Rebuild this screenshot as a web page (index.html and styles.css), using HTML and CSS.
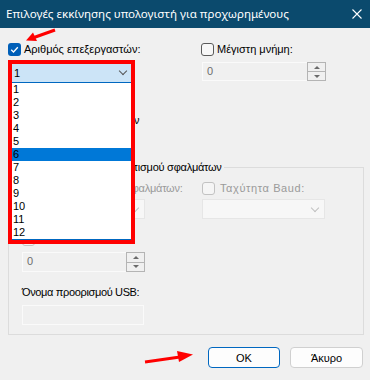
FILE: index.html
```html
<!DOCTYPE html>
<html lang="el">
<head>
  <meta charset="UTF-8">
  <title>Επιλογές εκκίνησης</title>
  <link rel="stylesheet" href="styles.css">
</head>
<body>
  <div class="dialog">
    <header class="titlebar">
      <span class="title">Επιλογές εκκίνησης υπολογιστή για προχωρημένους</span>
      <svg class="close" width="10" height="10" viewBox="0 0 10 10">
        <path d="M0.5 0.5L9.5 9.5M9.5 0.5L0.5 9.5" stroke="#fff" stroke-width="1.1"/>
      </svg>
    </header>

    <div class="body">
      <div class="top">
        <div class="col">
          <label class="check">
            <span class="box checked">
              <svg width="13" height="13" viewBox="0 0 13 13"><path d="M3.2 6.8L5.5 9L9.8 4.3" fill="none" stroke="#fff" stroke-width="1.3"/></svg>
            </span>
            Αριθμός επεξεργαστών:
          </label>
          <div class="combo">1</div>
        </div>
        <div class="col">
          <label class="check"><span class="box"></span>Μέγιστη μνήμη:</label>
          <div class="spin">
            <span class="spin-value">0</span>
            <div class="spin-btns">
              <span class="spin-up"></span>
              <span class="spin-down"></span>
            </div>
          </div>
        </div>
      </div>

      <label class="check row-pci"><span class="box"></span>Κλείδωμα PCI</label>
      <label class="check row-debug"><span class="box"></span>Εντοπισμός σφαλμάτων</label>

      <fieldset class="group">
        <legend>Καθολικές ρυθμίσεις εντοπισμού σφαλμάτων</legend>
        <div class="group-top">
          <div>
            <label class="check disabled label-port"><span class="box"></span>Θύρα εντοπισμού σφαλμάτων:</label>
            <div class="combo combo-off"><span class="chev"></span></div>
          </div>
          <div>
            <label class="check disabled label-baud"><span class="box"></span>Ταχύτητα Baud:</label>
            <div class="combo combo-off"><span class="chev"></span></div>
          </div>
        </div>
        <label class="check disabled row-channel"><span class="box"></span>Κανάλι:</label>
        <div class="spin spin-channel">
          <span class="spin-value">0</span>
          <div class="spin-btns">
            <span class="spin-up"></span>
            <span class="spin-down"></span>
          </div>
        </div>
        <div class="usb-label">Όνομα προορισμού USB:</div>
        <div class="textbox"></div>
      </fieldset>

      <div class="buttons">
        <button class="btn btn-default">OK</button>
        <button class="btn">Άκυρο</button>
      </div>
    </div>

    <!-- open list of the processors combo -->
    <div class="dropdown">
      <div class="dropdown-head">1<span class="chev chev-dark"></span></div>
      <ul class="dropdown-list">
        <li>1</li>
        <li>2</li>
        <li>3</li>
        <li>4</li>
        <li>5</li>
        <li class="selected">6</li>
        <li>7</li>
        <li>8</li>
        <li>9</li>
        <li>10</li>
        <li>11</li>
        <li>12</li>
      </ul>
    </div>

    <!-- red annotation arrows -->
    <svg class="marks" width="370" height="380" viewBox="0 0 370 380">
      <path d="M55 30L34 37.5" stroke="#f00" stroke-width="3"/>
      <path d="M26 40.5L33 32.5L37 41Z" fill="#f00"/>
      <path d="M145 362L180 357" stroke="#f00" stroke-width="3"/>
      <path d="M193 354.5L177 351L179 362Z" fill="#f00"/>
    </svg>
  </div>
</body>
</html>
```

FILE: styles.css
```css
body {
  margin: 0;
  background-color: #f0f0f0;
  font-family: "Liberation Sans", Arial, sans-serif;
  font-size: 11px;
  color: #000000;
}
.dialog {
  position: relative;
  width: 370px;
  height: 380px;
  overflow: hidden;
}
.titlebar {
  height: 28px;
  background-color: #0b4a6d;
  color: #ffffff;
  display: flex;
  align-items: center;
  justify-content: space-between;
  padding: 0 7px 0 6px;
}
.title {
  font-family: "Noto Sans", "DejaVu Sans", sans-serif;
  font-size: 11.6px;
  margin-top: -1px;
}
.close {
  margin-right: 1px;
}
.body {
  padding: 0 6px 0 8px;
}
.top {
  display: grid;
  grid-template-columns: 193px 1fr;
  padding-top: 13px;
}
.check {
  display: flex;
  align-items: center;
  height: 16px;
  gap: 3px;
  white-space: nowrap;
}
.box {
  width: 11px;
  height: 11px;
  border: 1px solid #5a5a5a;
  border-radius: 3px;
  background-color: #f7f7f7;
  flex: none;
}
.box.checked {
  width: 13px;
  height: 13px;
  border: none;
  background-color: #005fb8;
}
.box svg {
  display: block;
}
.check.disabled {
  color: #9a9a9a;
}
.check.disabled .box {
  border-color: #c2c2c2;
  background-color: #f5f5f5;
}
.combo {
  margin-top: 5px;
  height: 19px;
  width: 122px;
  box-sizing: border-box;
  border: 1px solid #e2e2e2;
  background-color: #f9f9f9;
  position: relative;
}
.spin {
  margin-top: 5px;
  margin-left: 1px;
  height: 19px;
  width: 124px;
  box-sizing: border-box;
  border: 1px solid #fafafa;
  display: flex;
  justify-content: space-between;
}
.spin-value {
  color: #6d6d6d;
  padding-left: 4px;
  line-height: 17px;
}
.spin-btns {
  width: 17px;
  display: flex;
  flex-direction: column;
  border: 1px solid #b4b4b4;
  margin: -1px -1px -1px 0;
}
.spin-up, .spin-down {
  flex: 1;
  display: flex;
  align-items: center;
  justify-content: center;
}
.spin-up {
  border-bottom: 1px solid #b4b4b4;
}
.spin-up::after, .spin-down::after {
  content: "";
  border-left: 3px solid transparent;
  border-right: 3px solid transparent;
}
.spin-up::after {
  border-bottom: 3px solid #6a6a6a;
}
.spin-down::after {
  border-top: 3px solid #6a6a6a;
}
.row-pci {
  margin-top: 11px;
}
.row-debug {
  margin-top: 4px;
  letter-spacing: -0.1px;
}
.group {
  margin: 31px 0 0 0;
  padding: 5px 13px 9px 13px;
  border: 1px solid #dcdcdc;
  min-width: 0;
  width: 356px;
  box-sizing: border-box;
}
.group legend {
  padding: 0 2px;
  margin-left: -10px;
  line-height: 16px;
  letter-spacing: -0.25px;
  white-space: nowrap;
}
.group-top {
  display: grid;
  grid-template-columns: 180px 1fr;
}
.group-top .check .box {
  margin-right: 2px;
}
.label-port {
  letter-spacing: -0.25px;
}
.label-baud {
  letter-spacing: 0.6px;
}
.combo-off {
  margin-top: 3px;
  height: 20px;
  width: 123px;
  background-color: #f7f7f7;
  border-color: #e6e6e6;
}
.chev {
  position: absolute;
  right: 6px;
  top: 5px;
  width: 5px;
  height: 5px;
  border-right: 1px solid #c0c0c0;
  border-bottom: 1px solid #c0c0c0;
  transform: rotate(45deg);
}
.row-channel {
  margin-top: 12px;
}
.spin-channel {
  margin-left: 0;
  width: 123px;
  height: 20px;
}
.usb-label {
  margin-top: 12px;
  line-height: 16px;
  letter-spacing: -0.35px;
}
.textbox {
  margin-top: 5px;
  height: 20px;
  width: 122px;
  box-sizing: border-box;
  border: 1px solid #fafafa;
}
.buttons {
  display: flex;
  justify-content: flex-end;
  gap: 10px;
  margin-top: 12px;
  padding-right: 1px;
}
.btn {
  width: 73px;
  height: 21px;
  font-family: inherit;
  font-size: 11px;
  font-weight: normal;
  background-color: #fdfdfd;
  border: 1px solid #d0d0d0;
  border-radius: 4px;
  padding: 0;
  color: #000000;
}
.btn-default {
  width: 72px;
  border-color: #0067c0;
}
.dropdown {
  position: absolute;
  left: 8px;
  top: 60px;
  width: 119px;
  border: 4px solid #ff0000;
  background-color: #ffffff;
}
.dropdown-head {
  position: relative;
  height: 18px;
  line-height: 18px;
  padding-left: 2px;
  background-color: #cce4f7;
  border-bottom: 1px solid #0067c0;
}
.chev-dark {
  border-color: #555555;
  right: 5px;
  top: 4px;
}
.dropdown-list {
  list-style: none;
  margin: 0;
  padding: 0;
  border-bottom: 1px solid #0067c0;
}
.dropdown-list li {
  height: 13px;
  line-height: 13px;
  padding-left: 1px;
}
.dropdown-list li.selected {
  background-color: #0078d7;
}
.marks {
  position: absolute;
  left: 0;
  top: 0;
  pointer-events: none;
}
```
